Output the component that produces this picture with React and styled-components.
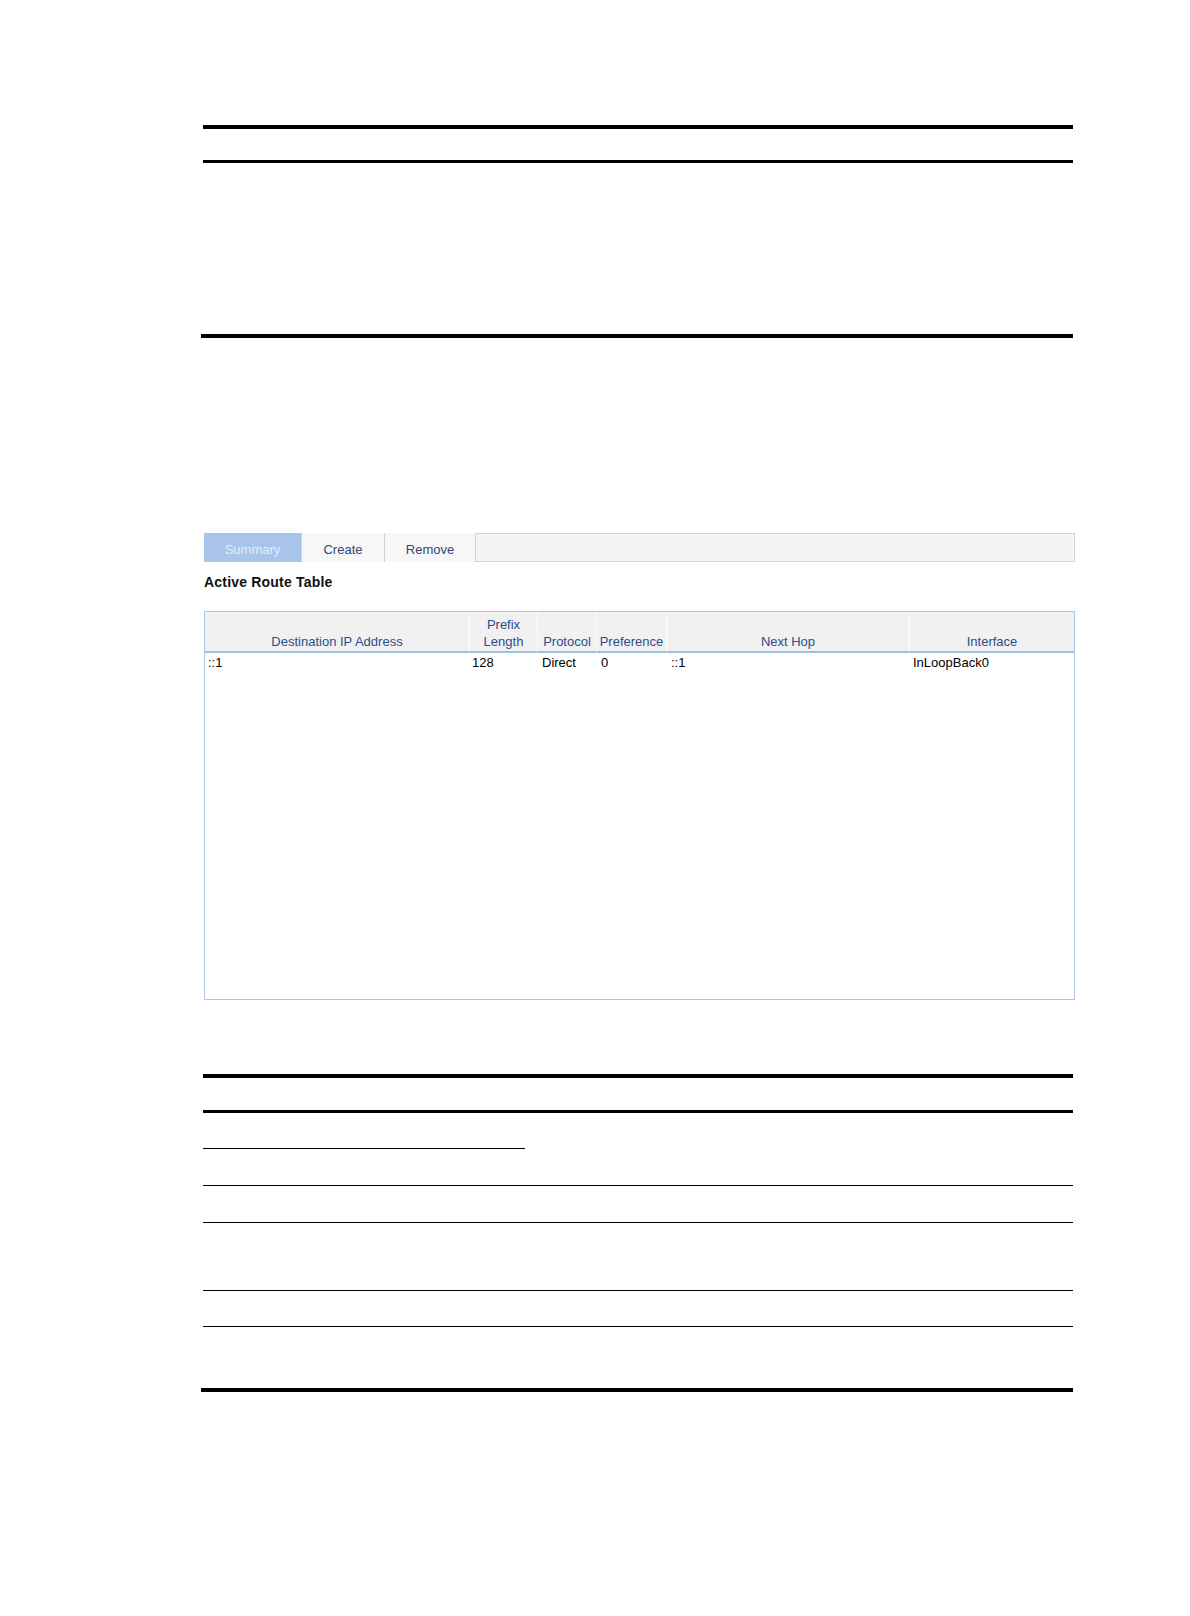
import React from "react";
import styled, { createGlobalStyle } from "styled-components";

const Global = createGlobalStyle`
  html, body { margin: 0; padding: 0; background: #fff; }
  body { font-family: "Liberation Sans", Arial, sans-serif; }
  * { box-sizing: border-box; }
`;

const Page = styled.div`
  width: 1190px;
  min-height: 1616px;
  padding: 125px 0 0 201px;
`;

const DocTable = styled.div`
  margin-left: 2px;
  width: 870px;
  border-top: 4px solid #000;
  margin-top: ${(p) => p.$mt || 0}px;
`;

const DocHead = styled.div`
  height: ${(p) => p.$h}px;
  border-bottom: 3px solid #000;
`;

const DocRow = styled.div`
  height: ${(p) => p.$h}px;
  border-bottom: ${(p) => (p.$last ? "4px solid #000" : p.$partial ? "none" : "1px solid #000")};
  margin-left: ${(p) => (p.$last ? "-2px" : "0")};
  width: ${(p) => (p.$last ? "872px" : "auto")};
  display: flex;
  flex-direction: column;
  justify-content: flex-end;
`;

const PartialCell = styled.div`
  width: 322px;
  border-bottom: 1px solid #000;
  flex: 1;
`;

const Shot = styled.div`
  margin-top: 195px;
  margin-left: 3px;
  width: 871px;
`;

const TabBar = styled.div`
  display: flex;
  height: 29px;
  background: #f4f4f4;
  border: 1px solid #d3d3d3;
`;

const Tab = styled.div`
  width: ${(p) => p.$w}px;
  display: flex;
  align-items: center;
  justify-content: center;
  padding-top: 3px;
  font-size: 13px;
  color: ${(p) => (p.$active ? "#e4edf9" : "#2d4a7a")};
  background: ${(p) => (p.$active ? "#a9c4eb" : "#f7f7f7")};
  border-right: 1px solid #d0d0d0;
  margin: -1px 0 -1px ${(p) => (p.$first ? "-1px" : "0")};
`;

const Heading = styled.div`
  margin-top: 12px;
  font-size: 14px;
  line-height: 17px;
  font-weight: bold;
  letter-spacing: 0.2px;
  color: #111;
`;

const RouteTable = styled.div`
  margin-top: 20px;
  height: 389px;
  border: 1px solid #a9c7e6;
  display: grid;
  grid-template-columns: 265px 68px 59px 70px 243px 164px;
  grid-template-rows: 41px 18px 1fr;
`;

const HeadCell = styled.div`
  background: #f1f1f1;
  border-bottom: 2px solid #9dbfe4;
  border-right: ${(p) => (p.$lastCol ? "none" : "1px solid #fdfdfd")};
  color: #2b4d8c;
  font-size: 13px;
  line-height: 17px;
  text-align: center;
  display: flex;
  flex-direction: column;
  justify-content: flex-end;
  padding-bottom: 1px;
`;

const Cell = styled.div`
  font-size: 13px;
  line-height: 17px;
  color: #000;
  padding-top: 1px;
  padding-left: ${(p) => p.$pl ?? 3}px;
  white-space: nowrap;
`;

const Filler = styled.div`
  grid-column: 1 / -1;
  background: #fff;
`;

const cols = [
  { head: ["Destination IP Address"], val: "::1", pl: 3 },
  { head: ["Prefix", "Length"], val: "128", pl: 2 },
  { head: ["Protocol"], val: "Direct", pl: 4 },
  { head: ["Preference"], val: "0", pl: 4 },
  { head: ["Next Hop"], val: "::1", pl: 4 },
  { head: ["Interface"], val: "InLoopBack0", pl: 3 },
];

export default function App() {
  return (
    <Page>
      <Global />
      <DocTable>
        <DocHead $h={34} />
        <DocRow $h={175} $last />
      </DocTable>

      <Shot>
        <TabBar>
          <Tab $w={98} $active $first>Summary</Tab>
          <Tab $w={83}>Create</Tab>
          <Tab $w={91}>Remove</Tab>
        </TabBar>
        <Heading>Active Route Table</Heading>
        <RouteTable>
          {cols.map((c, i) => (
            <HeadCell key={"h" + i} $lastCol={i === cols.length - 1}>
              {c.head.map((t) => (
                <span key={t}>{t}</span>
              ))}
            </HeadCell>
          ))}
          {cols.map((c, i) => (
            <Cell key={"c" + i} $pl={c.pl}>
              {c.val}
            </Cell>
          ))}
          <Filler />
        </RouteTable>
      </Shot>

      <DocTable $mt={74}>
        <DocHead $h={35} />
        <DocRow $h={36} $partial>
          <PartialCell />
        </DocRow>
        <DocRow $h={37} />
        <DocRow $h={37} />
        <DocRow $h={68} />
        <DocRow $h={36} />
        <DocRow $h={65} $last />
      </DocTable>
    </Page>
  );
}
